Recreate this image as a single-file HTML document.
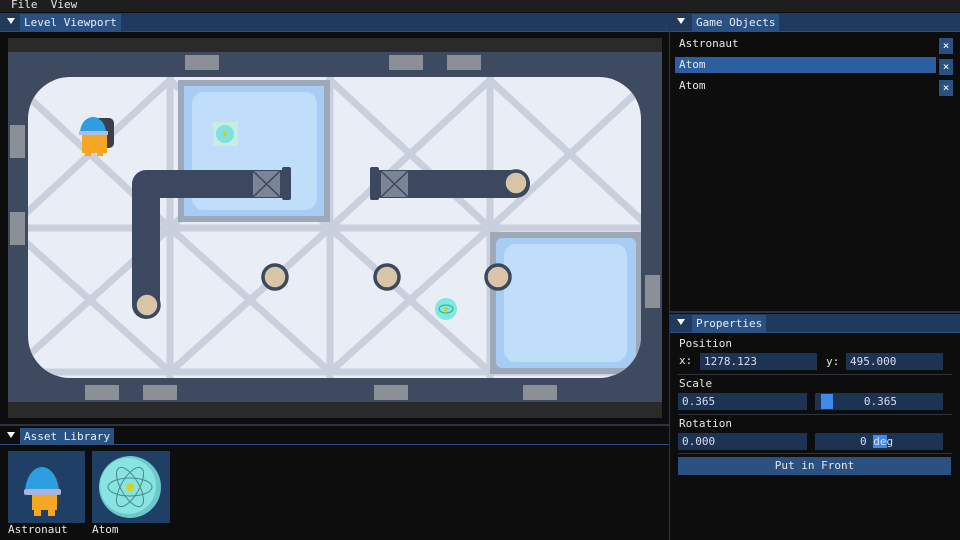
<!DOCTYPE html><html><head><style>
*{margin:0;padding:0;box-sizing:border-box}
body{width:960px;height:540px;background:#0d0d0d;font-family:"DejaVu Sans Mono","Liberation Mono",monospace;font-size:11px;color:#e8e8e8;position:relative;overflow:hidden}
.a{position:absolute}
.bar{background:#203a5e;height:18px}
.tab{position:absolute;top:1px;height:17px;background:#2b5182;padding:2px 4px;color:#e8eef6}
.tri{position:absolute;left:7px;top:5px;width:0;height:0;border-left:4px solid transparent;border-right:4px solid transparent;border-top:6px solid #fff}
.fld{position:absolute;background:#1c3353;height:17px;padding:2px 4px;color:#dde}
.x{position:absolute;width:14px;height:16px;background:#2b5182;color:#fff;text-align:center;line-height:16px}
.sep{position:absolute;height:1px;background:#2d3440;left:678px;width:274px}
</style></head><body>
<div class="a" style="left:0;top:0;width:960px;height:12px;background:#1e1e1e"></div>
<div class="a" style="left:11px;top:-2px">File&nbsp;&nbsp;View</div>
<div class="a bar" style="left:0;top:13px;width:669px"><div class="tri"></div><div class="tab" style="left:20px">Level Viewport</div></div>
<div class="a" style="left:0;top:31px;width:669px;height:1px;background:#2b5182"></div>
<svg class="a" style="left:8px;top:38px" width="654" height="380" viewBox="8 38 654 380">
<rect x="8" y="38" width="654" height="380" fill="#2a2a2a"/>
<rect x="8" y="52" width="654" height="350" fill="#3e4a5f"/>
<g fill="#8b8f96">
<rect x="185" y="55" width="34" height="15"/><rect x="389" y="55" width="34" height="15"/><rect x="447" y="55" width="34" height="15"/>
<rect x="10" y="125" width="15" height="33"/><rect x="10" y="212" width="15" height="33"/><rect x="645" y="275" width="15" height="33"/>
<rect x="85" y="385" width="34" height="15"/><rect x="143" y="385" width="34" height="15"/><rect x="374" y="385" width="34" height="15"/><rect x="523" y="385" width="34" height="15"/>
</g>
<clipPath id="c"><rect x="28" y="77" width="613" height="301" rx="42"/></clipPath>
<rect x="28" y="77" width="613" height="301" rx="42" fill="#e9edf5"/>
<g clip-path="url(#c)" stroke="#c9cfdc" stroke-width="7" fill="none">
<line x1="170" y1="70" x2="170" y2="390"/><line x1="330" y1="70" x2="330" y2="390"/><line x1="490" y1="70" x2="490" y2="390"/>
<line x1="20" y1="228" x2="650" y2="228"/><line x1="20" y1="372" x2="650" y2="372"/>
<path d="M10 80L170 228L330 80L490 228L650 80M10 228L170 80L330 228L490 80L650 228M10 228L170 372L330 228L490 372L650 228M10 372L170 228L330 372L490 228L650 372"/>
</g>
<g clip-path="url(#c)">
<rect x="178" y="80" width="152" height="142" fill="#9da8b8"/><rect x="184" y="86" width="140" height="130" fill="#a8cdf5"/><rect x="192" y="92" width="125" height="118" rx="12" fill="#c0defa"/>
<rect x="490" y="232" width="155" height="142" fill="#9da8b8"/><rect x="496" y="238" width="140" height="130" rx="6" fill="#a8cdf5"/><rect x="504" y="244" width="123" height="118" rx="12" fill="#c0defa"/>
</g>
<path d="M290 170H146a14 14 0 0 0-14 14V305a14 14 0 0 0 28 0V198H290Z" fill="#3c4860"/>
<rect x="282" y="167" width="9" height="33" rx="2" fill="#3c4860"/>
<rect x="253" y="171" width="27" height="26" fill="#7b8596"/><path d="M253 171L280 197M280 171L253 197" stroke="#3c4860" stroke-width="1.5"/>
<path d="M372 170H516a14 14 0 0 1 0 28H372Z" fill="#3c4860"/><rect x="370" y="167" width="9" height="33" rx="2" fill="#3c4860"/>
<rect x="381" y="171" width="27" height="26" fill="#7b8596"/><path d="M381 171L408 197M408 171L381 197" stroke="#3c4860" stroke-width="1.5"/>
<g fill="#d9c4a8" stroke="#3c4860" stroke-width="3.5">
<circle cx="147" cy="305" r="12"/><circle cx="275" cy="277" r="12"/><circle cx="387" cy="277" r="12"/><circle cx="498" cy="277" r="12"/><circle cx="516" cy="183" r="12"/></g>
<rect x="213" y="122" width="25" height="24" fill="#c8f0d8" opacity=".8"/><circle cx="225" cy="134" r="9" fill="#7fe0e0"/><circle cx="225" cy="134" r="2" fill="#d0d020"/>
<circle cx="446" cy="309" r="11" fill="#7fe8e0"/><ellipse cx="446" cy="309" rx="7" ry="4" fill="none" stroke="#3a7" stroke-width="1"/><circle cx="446" cy="309" r="2" fill="#d0d020"/>
<rect x="94" y="118" width="20" height="30" rx="5" fill="#3a3f48"/>
<rect x="82" y="133" width="25" height="20" fill="#f5a623"/><rect x="85" y="150" width="6" height="6" fill="#f5a623"/><rect x="97" y="150" width="6" height="6" fill="#f5a623"/>
<path d="M80 133a13 16 0 0 1 26 0Z" fill="#2d9ee0"/><rect x="79" y="131" width="29" height="4" fill="#b0bce0"/>
</svg>
<div class="a" style="left:669px;top:13px;width:1px;height:527px;background:#2d3440"></div>
<div class="a bar" style="left:670px;top:13px;width:290px"><div class="tri"></div><div class="tab" style="left:22px">Game Objects</div></div>
<div class="a" style="left:670px;top:31px;width:290px;height:1px;background:#2b5182"></div>
<div class="a" style="left:679px;top:37px">Astronaut</div>
<div class="a" style="left:675px;top:57px;width:261px;height:16px;background:#2b5fa0"></div>
<div class="a" style="left:679px;top:58px">Atom</div>
<div class="a" style="left:679px;top:79px">Atom</div>
<div class="x" style="left:939px;top:38px">×</div><div class="x" style="left:939px;top:59px">×</div><div class="x" style="left:939px;top:80px">×</div>
<div class="a" style="left:670px;top:311px;width:290px;height:2px;background:#2d3440"></div>
<div class="a bar" style="left:670px;top:314px;width:290px"><div class="tri"></div><div class="tab" style="left:22px">Properties</div></div>
<div class="a" style="left:670px;top:332px;width:290px;height:1px;background:#2b5182"></div>
<div class="a" style="left:679px;top:337px">Position</div>
<div class="a" style="left:679px;top:354px">x:</div>
<div class="fld" style="left:700px;top:353px;width:117px">1278.123</div>
<div class="a" style="left:826px;top:355px">y:</div>
<div class="fld" style="left:846px;top:353px;width:97px">495.000</div>
<div class="sep" style="top:374px"></div>
<div class="a" style="left:679px;top:377px">Scale</div>
<div class="fld" style="left:678px;top:393px;width:129px">0.365</div>
<div class="fld" style="left:815px;top:393px;width:128px;text-align:right;padding-right:46px">0.365</div>
<div class="a" style="left:821px;top:394px;width:12px;height:15px;background:#3d8ae8"></div>
<div class="sep" style="top:414px"></div>
<div class="a" style="left:679px;top:417px">Rotation</div>
<div class="fld" style="left:678px;top:433px;width:129px">0.000</div>
<div class="fld" style="left:815px;top:433px;width:128px;padding-left:45px">0 <span style="background:#3d8ae8">de</span>g</div>
<div class="sep" style="top:453px"></div>
<div class="a" style="left:678px;top:457px;width:273px;height:18px;background:#2b5182;text-align:center;padding-top:2px">Put in Front</div>
<div class="a" style="left:0;top:424px;width:669px;height:2px;background:#2d3440"></div>
<div class="a bar" style="left:0;top:427px;width:669px;background:#0d0d0d"><div class="tri"></div><div class="tab" style="left:20px">Asset Library</div></div>
<div class="a" style="left:0;top:444px;width:669px;height:1px;background:#2b5182"></div>
<svg class="a" style="left:8px;top:451px" width="162" height="72">
<rect width="77" height="72" fill="#1f3f66"/><rect x="84" width="78" height="72" fill="#1f3f66"/>
<rect x="36" y="25" width="16" height="30" rx="6" fill="#3a3f48"/>
<rect x="24" y="41" width="25" height="18" fill="#f5a623"/><rect x="26" y="56" width="7" height="9" fill="#f5a623"/><rect x="40" y="56" width="7" height="9" fill="#f5a623"/>
<path d="M17 42a17 26 0 0 1 34 0Z" fill="#2d9ee0"/><rect x="16" y="38" width="37" height="6" rx="2" fill="#a8b4d8"/>
<circle cx="122" cy="36" r="31" fill="#6cc9c9"/><circle cx="120" cy="35" r="28" fill="#88e4e0"/>
<g fill="none" stroke="#4a8a8a" stroke-width="1"><ellipse cx="122" cy="36" rx="22" ry="9"/><ellipse cx="122" cy="36" rx="22" ry="9" transform="rotate(60 122 36)"/><ellipse cx="122" cy="36" rx="22" ry="9" transform="rotate(-60 122 36)"/></g>
<circle cx="122" cy="36" r="4" fill="#d8d020"/>
</svg>
<div class="a" style="left:8px;top:523px">Astronaut</div>
<div class="a" style="left:92px;top:523px">Atom</div>
</body></html>
